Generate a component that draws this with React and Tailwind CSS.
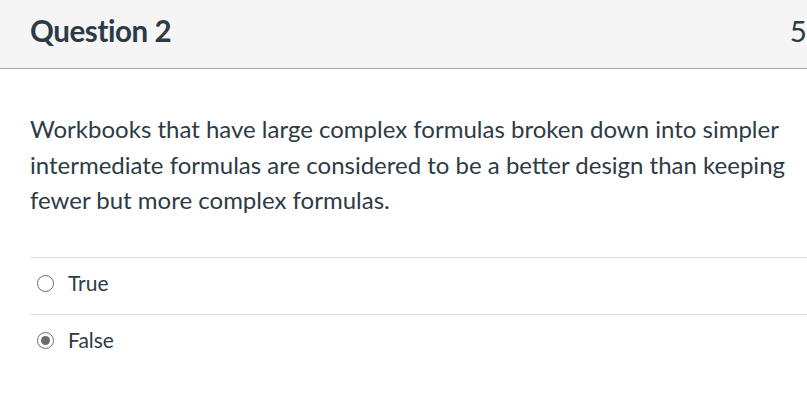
import React, { useState } from 'react';

const options = ['True', 'False'];

const Radio = ({ checked }) => (
    <span className="flex h-[17px] w-[17px] shrink-0 items-center justify-center rounded-full border-[1.5px] border-[#6b6b6b] bg-white">
        {checked && <span className="h-[9px] w-[9px] rounded-full bg-[#6b6b6b]" />}
    </span>
);

export default function App() {
    const [answer, setAnswer] = useState('False');

    return (
        <div className="h-[400px] w-[807px] overflow-hidden bg-white font-['Lato','Liberation_Sans',sans-serif] text-[#2d3b45]">
            <div className="w-[884px]">
                <div className="flex h-[69px] items-center justify-between border-b border-[#a5a5a5] bg-[#f5f5f5] pb-[5px] pl-[30px] pr-[30px]">
                    <h2 className="text-[29.5px] font-bold tracking-[-0.4px] text-[#2d3b45]">Question 2</h2>
                    <span className="text-[29.5px] text-[#2d3b45]">5 pts</span>
                </div>

                <div className="pl-[30px] pt-[42px]">
                    <p className="max-w-[762px] text-[24px] leading-[35.5px]">
                        Workbooks that have large complex formulas broken down into simpler intermediate formulas are considered to be a better design than keeping fewer but more complex formulas.
                    </p>

                    <div className="mt-[39px]">
                        {options.map((opt) => (
                            <label
                                key={opt}
                                onClick={() => setAnswer(opt)}
                                className="flex h-[57px] cursor-pointer items-center gap-[14px] border-t border-[#dcdcdc] pb-[5px] pl-[7px] text-[21px]"
                            >
                                <Radio checked={answer === opt} />
                                <span>{opt}</span>
                            </label>
                        ))}
                    </div>
                </div>
            </div>
        </div>
    );
}
